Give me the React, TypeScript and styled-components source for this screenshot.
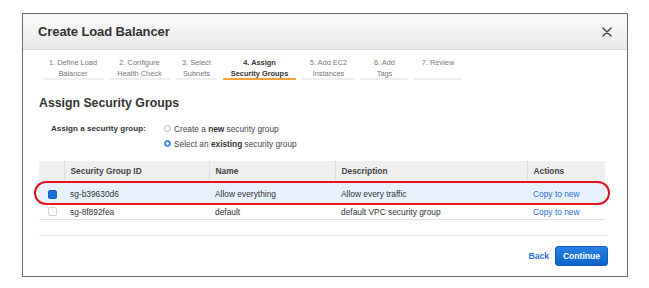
import React from "react";
import styled, { createGlobalStyle } from "styled-components";

const GlobalStyle = createGlobalStyle`
  html, body {
    margin: 0;
    padding: 0;
    background: #ffffff;
  }
  body {
    font-family: "Liberation Sans", Arial, Helvetica, sans-serif;
    color: #333;
  }
`;

const Page = styled.div`
  width: 649px;
  height: 288px;
  padding: 13px 0 0 22px;
  box-sizing: border-box;
`;

const Modal = styled.div`
  width: 606px;
  height: 264px;
  box-sizing: border-box;
  border: 1px solid #6a6a6a;
  background: #fff;
  display: flex;
  flex-direction: column;
`;

const Header = styled.div`
  height: 36px;
  box-sizing: border-box;
  border-bottom: 1px solid #d9d9d9;
  background: linear-gradient(#fbfbfb, #e9e9e9);
  display: flex;
  align-items: center;
  justify-content: space-between;
  padding: 0 15px 0 15px;
`;

const Title = styled.h1`
  margin: 0;
  font-size: 13px;
  font-weight: bold;
  color: #333;
  letter-spacing: -0.1px;
`;

const Close = styled.button`
  border: 0;
  background: none;
  padding: 0;
  width: 10px;
  height: 10px;
  display: flex;
  cursor: pointer;
`;

const Steps = styled.div`
  display: flex;
  gap: 6px;
  padding: 7px 0 0 20px;
`;

const Step = styled.div<{ $w: number; $active?: boolean }>`
  width: ${(p) => p.$w}px;
  height: 23px;
  box-sizing: border-box;
  border-bottom: 2px solid ${(p) => (p.$active ? "#f5a33a" : "#eeeeee")};
  text-align: center;
  font-size: 7.4px;
  line-height: 11px;
  color: ${(p) => (p.$active ? "#333" : "#777")};
  font-weight: ${(p) => (p.$active ? "bold" : "normal")};
  white-space: nowrap;
`;

const Body = styled.div`
  padding: 16px 21px 0 15px;
  display: flex;
  flex-direction: column;
`;

const Heading = styled.h2`
  margin: 0 0 0 1px;
  font-size: 12.3px;
  line-height: 15px;
  font-weight: bold;
  color: #333;
`;

const AssignBlock = styled.div`
  display: flex;
  padding: 10px 0 0 13px;
`;

const FieldLabel = styled.div`
  width: 113px;
  font-size: 8.1px;
  line-height: 15px;
  font-weight: bold;
  color: #333;
`;

const Options = styled.div`
  display: flex;
  flex-direction: column;
`;

const Option = styled.label`
  display: flex;
  align-items: center;
  gap: 3px;
  height: 15px;
  font-size: 8.3px;
  color: #444;
  b {
    color: #333;
  }
`;

const Radio = styled.span<{ $on?: boolean }>`
  width: 7px;
  height: 7px;
  border-radius: 50%;
  box-sizing: border-box;
  border: 1px solid ${(p) => (p.$on ? "#2f7fe3" : "#b5b5b5")};
  background: ${(p) =>
    p.$on ? "radial-gradient(circle, #fff 0 1.2px, #3b8bea 1.6px)" : "#fff"};
`;

const TableWrap = styled.div`
  position: relative;
  margin: 10px 0 0 1px;
  width: 566px;
`;

const Table = styled.table`
  width: 566px;
  border-collapse: collapse;
  table-layout: fixed;
  font-size: 8.4px;
  line-height: 10px;
`;

const Th = styled.th<{ $w: number }>`
  width: ${(p) => p.$w}px;
  box-sizing: border-box;
  height: 20px;
  padding: 0 0 0 6px;
  text-align: left;
  font-weight: bold;
  color: #444;
  background: #efefef;
  border-left: 1px solid #dedede;
  &:first-child {
    border-left: 0;
  }
`;

const Tr = styled.tr<{ $sel?: boolean }>`
  background: ${(p) => (p.$sel ? "#e7f1fb" : "#fff")};
  border-bottom: 1px solid #e2e2e2;
`;

const Td = styled.td<{ $h: number; $pt: number }>`
  height: ${(p) => p.$h}px;
  padding: ${(p) => p.$pt}px 0 0 6px;
  color: #333;
  white-space: nowrap;
  overflow: hidden;
`;

const Box = styled.span<{ $on?: boolean }>`
  display: block;
  margin-left: 3px;
  width: 9px;
  height: 9px;
  box-sizing: border-box;
  border-radius: 2px;
  border: 1px solid ${(p) => (p.$on ? "#1a5fc4" : "#d2d2d2")};
  background: ${(p) => (p.$on ? "#1f6fe0" : "#fff")};
`;

const Link = styled.a<{ $bold?: boolean }>`
  color: #2d70d2;
  text-decoration: none;
  font-weight: ${(p) => (p.$bold ? "bold" : "normal")};
  cursor: pointer;
`;

const Highlight = styled.div`
  position: absolute;
  left: -5px;
  top: 20px;
  width: 576px;
  height: 24px;
  box-sizing: border-box;
  border: 2.5px solid #e5141c;
  border-radius: 12px;
  pointer-events: none;
`;

const Footer = styled.div`
  margin: 15px 0 0 1px;
  width: 569px;
  border-top: 1px solid #e3e3e3;
  display: flex;
  justify-content: flex-end;
  align-items: center;
  gap: 6px;
  padding-top: 10px;
  font-size: 8.6px;
`;

const Continue = styled.button`
  width: 53px;
  height: 20px;
  border: 1px solid #0f5bbf;
  border-radius: 3px;
  background: linear-gradient(#2a7fe6, #0e62cc);
  color: #fff;
  font-family: inherit;
  font-size: 8.6px;
  font-weight: bold;
  padding: 0;
  cursor: pointer;
`;

const steps = [
  { w: 60, a: "1. Define Load", b: "Balancer" },
  { w: 61, a: "2. Configure", b: "Health Check" },
  { w: 41, a: "3. Select", b: "Subnets" },
  { w: 73, a: "4. Assign", b: "Security Groups", active: true },
  { w: 53, a: "5. Add EC2", b: "Instances" },
  { w: 47, a: "6. Add", b: "Tags" },
  { w: 48, a: "7. Review", b: "" },
];

const groups = [
  { id: "sg-b39630d6", name: "Allow everything", desc: "Allow every traffic", sel: true, h: 18, pt: 4 },
  { id: "sg-8f892fea", name: "default", desc: "default VPC security group", h: 15, pt: 0 },
];

export default function App() {
  return (
    <Page>
      <GlobalStyle />
      <Modal>
        <Header>
          <Title>Create Load Balancer</Title>
          <Close aria-label="Close">
            <svg width="10" height="10" viewBox="0 0 10 10">
              <path d="M1 1 L9 9 M9 1 L1 9" stroke="#444" strokeWidth="1.5" strokeLinecap="round" />
            </svg>
          </Close>
        </Header>
        <Steps>
          {steps.map((s) => (
            <Step key={s.a} $w={s.w} $active={s.active}>
              {s.a}
              <br />
              {s.b}
            </Step>
          ))}
        </Steps>
        <Body>
          <Heading>Assign Security Groups</Heading>
          <AssignBlock>
            <FieldLabel>Assign a security group:</FieldLabel>
            <Options>
              <Option>
                <Radio />
                <span>
                  Create a <b>new</b> security group
                </span>
              </Option>
              <Option>
                <Radio $on />
                <span>
                  Select an <b>existing</b> security group
                </span>
              </Option>
            </Options>
          </AssignBlock>
          <TableWrap>
            <Table>
              <thead>
                <tr>
                  <Th $w={25}></Th>
                  <Th $w={145}>Security Group ID</Th>
                  <Th $w={126}>Name</Th>
                  <Th $w={192}>Description</Th>
                  <Th $w={78}>Actions</Th>
                </tr>
              </thead>
              <tbody>
                {groups.map((g) => (
                  <Tr key={g.id} $sel={g.sel}>
                    <Td $h={g.h} $pt={g.pt}>
                      <Box $on={g.sel} />
                    </Td>
                    <Td $h={g.h} $pt={g.pt}>{g.id}</Td>
                    <Td $h={g.h} $pt={g.pt}>{g.name}</Td>
                    <Td $h={g.h} $pt={g.pt}>{g.desc}</Td>
                    <Td $h={g.h} $pt={g.pt}>
                      <Link>Copy to new</Link>
                    </Td>
                  </Tr>
                ))}
              </tbody>
            </Table>
            <Highlight />
          </TableWrap>
          <Footer>
            <Link $bold>Back</Link>
            <Continue>Continue</Continue>
          </Footer>
        </Body>
      </Modal>
    </Page>
  );
}
